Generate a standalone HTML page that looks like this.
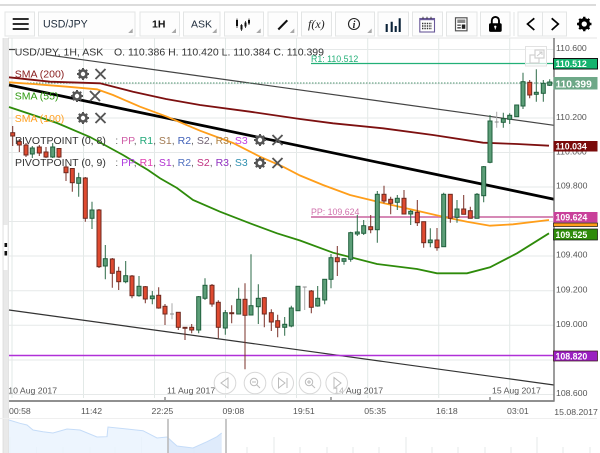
<!DOCTYPE html>
<html><head><meta charset="utf-8"><style>
html,body{margin:0;padding:0;background:#fff;width:600px;height:453px;overflow:hidden}
svg{display:block;filter:blur(.3px)}
text{font-family:"Liberation Sans",sans-serif}
.ax{font-size:8.7px;fill:#555}
.lg{font-size:10.5px}
.pl{font-size:8.8px;font-weight:bold;fill:#fff}
.btn{fill:#fdfdfd;stroke:#e3e5e5;stroke-width:1}
.tri{fill:#a8a8a8}
.x{stroke:#555;stroke-width:1.9;fill:none}
</style></head><body>
<svg width="600" height="453" viewBox="0 0 600 453" xmlns="http://www.w3.org/2000/svg">
<defs>
<g id="gear"><circle r="3.7" fill="none" stroke-width="2.3" stroke="currentColor"/><path d="M0-6V6M-6 0H6M-4.2-4.2L4.2 4.2M-4.2 4.2L4.2-4.2" stroke="currentColor" stroke-width="2" /><circle r="2.2" fill="#fff"/></g>
<g id="xx"><path class="x" d="M-5-5L5 5M-5 5L5-5"/></g>
</defs>

<!-- top bar -->
<rect x="0" y="4" width="596" height="2" fill="#dcdcdc"/>
<rect x="8" y="37.5" width="589" height="1" fill="#e4e4e4"/>
<!-- toolbar buttons -->
<rect class="btn" x="5" y="12" width="29.5" height="24"/>
<rect class="btn" x="38.5" y="12" width="96.5" height="24"/>
<rect class="btn" x="140" y="12" width="39.5" height="24"/>
<rect class="btn" x="183.5" y="12" width="36.5" height="24"/>
<rect class="btn" x="224.5" y="12" width="39" height="24"/>
<rect class="btn" x="268" y="12" width="29.5" height="24"/>
<rect class="btn" x="301.5" y="12" width="30" height="24"/>
<rect class="btn" x="335.5" y="12" width="39" height="24"/>
<rect class="btn" x="378" y="12" width="30.5" height="24"/>
<rect class="btn" x="412.5" y="12" width="30" height="24"/>
<rect class="btn" x="446.5" y="12" width="30.5" height="24"/>
<rect class="btn" x="480.5" y="12" width="29.5" height="24"/>
<path d="M514 12V36" stroke="#e3e5e5"/>
<rect class="btn" x="518" y="12" width="48.5" height="24"/>
<path d="M542.5 12V36" stroke="#e3e5e5"/>
<!-- triangles -->
<path class="tri" d="M128.2 33H132.7V28.5Z M171.5 33H176V28.5Z M212.2 33H216.7V28.5Z M256.2 33H260.7V28.5Z M289.8 33H294.3V28.5Z M367.2 33H371.7V28.5Z"/>
<!-- hamburger -->
<path d="M12.7 19H28.7M12.7 24H28.7M12.7 29H28.7" stroke="#111" stroke-width="1.7"/>
<text x="43" y="27.7" font-size="10.6" fill="#1c2a3a">USD/JPY</text>
<text x="152" y="27.7" font-size="10.5" font-weight="bold" fill="#111">1H</text>
<text x="191" y="27.7" font-size="10.5" fill="#1c2a3a">ASK</text>
<!-- candle icon -->
<path d="M237 18.5V28M241.5 24V31M245.5 21V28M249 18.5V25" stroke="#222" stroke-width=".8"/>
<path d="M237 20V26M241.5 25V29.5M245.5 22.5V26.5M249 20V23.5" stroke="#111" stroke-width="2"/>
<!-- pencil -->
<path d="M278.3 29.5L287.3 20.3" stroke="#111" stroke-width="2.1"/>
<!-- fx -->
<text x="308" y="28" font-size="12" font-style="italic" fill="#222" style="font-family:'Liberation Serif',serif">f(x)</text>
<!-- info -->
<circle cx="354" cy="24" r="5.5" fill="none" stroke="#222" stroke-width="1.1"/>
<text x="352.6" y="27.8" font-size="10" font-style="italic" font-weight="bold" fill="#222" style="font-family:'Liberation Serif',serif">i</text>
<!-- bars -->
<path d="M386.7 32V24M391.7 32V21.7M395.7 32V26M399.7 32V18.3" stroke="#0a2238" stroke-width="2.1"/>
<!-- calendar -->
<rect x="419.8" y="18.5" width="14.7" height="13.5" fill="#fff" stroke="#6a5a9a" stroke-width="1.1"/>
<path d="M420 19.5H434" stroke="#6a5a9a" stroke-width="1.4"/>
<path d="M423 16.7V19M427 16.7V19M431 16.7V19" stroke="#333" stroke-width=".9"/>
<path d="M422 23.5H432M422 26H432M422 28.5H432" stroke="#333" stroke-width="1.4" stroke-dasharray="1.4 1"/>
<!-- calc -->
<rect x="455.5" y="17.8" width="11.5" height="13" fill="#fff" stroke="#555" stroke-width="1.2"/>
<rect x="457.3" y="19.5" width="8" height="3.5" fill="#888"/>
<rect x="457.3" y="24.5" width="3.5" height="1.4" fill="#555"/>
<rect x="457.3" y="27" width="3.5" height="1.6" fill="#555"/>
<rect x="461.8" y="24.5" width="3.5" height="4.3" fill="#222"/>
<!-- lock -->
<path d="M491.8 24V20.5a3.6 3.6 0 0 1 7.2 0V24" fill="none" stroke="#000" stroke-width="1.9"/>
<rect x="489" y="23.3" width="12.7" height="8.6" rx="1.6" fill="#000"/>
<circle cx="495.3" cy="26.8" r="1.2" fill="#fff"/><rect x="494.8" y="27" width="1" height="2.4" fill="#fff"/>
<!-- chevrons -->
<path d="M534.3 18.3L527.5 24L534.3 30M551.7 18.3L558.3 24L551.7 30" fill="none" stroke="#000" stroke-width="1.7"/>
<use href="#gear" x="584.3" y="24" color="#000" transform="translate(-116.9 -4.8) scale(1.2)"/>

<!-- left strip -->
<rect x="3" y="38" width="5" height="415" fill="#e9e9e9"/>
<rect x="3.5" y="225" width="4" height="45" fill="#fff"/>
<path d="M3 38V453M8.5 38V453" stroke="#d8d8d8" stroke-width=".7"/>
<rect x="4.5" y="243" width="2.6" height="4" fill="#111"/>
<rect x="4.5" y="251" width="2.6" height="4.5" fill="#111"/>

<!-- grid -->
<path d="M12 38V398M83.5 38V398M154.5 38V398M225.5 38V398M296.5 38V398M367.7 38V398M438.7 38V398M509.7 38V398" stroke="#e2e9e7"/>
<path d="M9 49.5H554M9 83.7H554M9 118H554M9 152.5H554M9 187H554M9 221.5H554M9 256H554M9 290.7H554M9 325.3H554M9 360H554M9 394.5H554" stroke="#e6e9e9"/>

<!-- lines -->
<path d="M9 49.5H15M47 54.8L554 125.3" stroke="#444" stroke-width="1.2" fill="none"/>
<path d="M9 310L554 385" stroke="#333" stroke-width="1.2" fill="none"/>
<path d="M9 83H553" stroke="#4f9470" stroke-width="1.1" stroke-dasharray="1.5 1.5"/>
<path d="M311 63.5H553" stroke="#22b077" stroke-width="1.2"/>
<path d="M311 217H553" stroke="#d078ac" stroke-width="1.7"/>
<path d="M9 355.5H553" stroke="#b030d8" stroke-width="1.4"/>
<path d="M9 85L554 199.2" stroke="#000" stroke-width="2.8"/>
<path d="M9 77.3L50 81.7L100 83.3L133 91.7L166 99L200 105L250 111.7L300 119L333 123.3L383 128.3L433 135L483 142.7L517 144L549 145.7" fill="none" stroke="#7d1010" stroke-width="1.8"/>
<path d="M9 82.3L33 84L67 86.7L97 89.3L113 95L140 106.7L167 116.7L200 130.7L233 143L260 156.7L283 166.7L300 175.5L323 185L350 195L383 203L417 210.7L443 216.7L467 221.7L490 225.7L513 224.3L549 220" fill="none" stroke="#ff9e1a" stroke-width="1.8"/>
<path d="M9 107L33 115L57 123L90 137L123 155L148 170L160 178.3L177 188L193 200L220 211.7L250 223.3L277 233.3L300 240.5L333 252.7L377 264L417 269L437 273.3L467 273.3L490 267.3L517 253.3L549 233.3" fill="none" stroke="#2e8b0a" stroke-width="1.8"/>

<!-- wicks red -->
<path fill="none" stroke="#7a3028" stroke-width="1" d="M12.7 126V146M19.3 139V152M26 143V157M39.3 145V156M46 147V158M59 148V158M66 165V181M72.3 168V191.7M85.3 177V221.7M99 209V268M112.3 258V287.7M118.7 266.7V290M132 275V298.3M145.3 286V303.3M158.7 287.3V308.7M165 304V325M178.3 312V330M185 327V340M191.7 324V333.3M212 284V306.7M218.3 300.3V338.3M231.7 305.3V323.3M245 283.3V369.3M264.3 297V327.3M271.3 309.3V331M277.7 314.7V337.3M311.3 290V313.3M337.3 246V276M370.7 215V233.3M384 185.7V203.3M390.7 196.7V214.3M404 190V214M417.3 200V226M423.7 221.7V247.7M437 228V250.7M450.3 194.3V222.7M463.7 195V214.3M470.3 206.7V218.3M529.7 80V98.3"/>
<!-- wicks green -->
<path fill="none" stroke="#2d6b48" stroke-width="1" d="M32.3 146V158M52.7 143V158M78.7 172.7V196.7M92 201.7V229M105.3 245V279.3M125.7 261V283.3M139 276V296.7M152.3 291V304.3M198.7 296V333.3M205 278.3V300M225.3 310V334.7M238.7 287.7V314.3M251 254.3V315.3M258.3 284.3V324M284.7 317V335.7M291.3 305.7V327.3M298 286V311M317.7 286V306.7M324.7 279V304.3M331 254V288.3M344 258V264.7M350.7 231.7V261.7M357.3 215V236M363.7 220V235M377.3 191V242.7M397.3 195V210M410.7 210V225M430.3 228.3V247.3M443.7 192.7V247M457 200V222.7M477 193V218.3M483.7 166V202.3M490 115V163.3M503.3 112.7V127.7M509.7 113.3V124M516.7 105V117M523 72.7V109M536.3 69.3V101.7M543.3 80V101.7M549.7 79.3V86"/>
<path fill="none" stroke="#aaa" stroke-width="1" d="M172 303.3V319.3M304.7 287V310M496.7 111.7V127.7"/>
<path fill="none" stroke="#888" stroke-width="1" d="M170 314H174M302.7 287H306.7M494.7 122H498.7"/>
<!-- bodies red -->
<g fill="#df4a30" stroke="#6e2a20" stroke-width="1">
<rect x="10.7" y="132.7" width="4" height="3.3"/><rect x="17.3" y="141.5" width="4" height="3.5"/><rect x="24" y="145" width="4" height="10"/><rect x="37.3" y="147" width="4" height="6"/><rect x="44" y="152" width="4" height="5"/><rect x="57" y="148.5" width="4" height="8.5"/><rect x="64" y="167" width="4" height="5.7"/><rect x="70.3" y="168.5" width="4" height="14.2"/><rect x="83.3" y="178" width="4" height="40.3"/><rect x="97" y="210" width="4" height="56.7"/><rect x="110.3" y="259" width="4" height="14.3"/><rect x="116.7" y="271.3" width="4" height="10.4"/><rect x="130" y="276" width="4" height="19.7"/><rect x="143.3" y="286.7" width="4" height="12.3"/><rect x="156.7" y="295.3" width="4" height="12.7"/><rect x="163" y="306.3" width="4" height="7.7"/><rect x="176.3" y="312.3" width="4" height="15"/><rect x="183" y="327.3" width="4" height="1"/><rect x="189.7" y="327.3" width="4" height="2.7"/><rect x="210" y="285.3" width="4" height="18.7"/><rect x="216.3" y="302.3" width="4" height="25"/><rect x="229.7" y="312.7" width="4" height="1"/><rect x="243" y="299.3" width="4" height="16"/><rect x="262.3" y="297.7" width="4" height="16.3"/><rect x="269.3" y="312.7" width="4" height="9.3"/><rect x="275.7" y="320.7" width="4" height="6.6"/><rect x="309.3" y="291" width="4" height="16.3"/><rect x="335.3" y="257.7" width="4" height="4"/><rect x="368.7" y="226.7" width="4" height="3"/><rect x="382" y="194.3" width="4" height="6.7"/><rect x="388.7" y="199.3" width="4" height="4"/><rect x="402" y="198.3" width="4" height="15.7"/><rect x="415.3" y="212.3" width="4" height="10.4"/><rect x="421.7" y="221.7" width="4" height="21"/><rect x="435" y="240" width="4" height="7.7"/><rect x="448.3" y="194.3" width="4" height="24"/><rect x="461.7" y="209" width="4" height="5.3"/><rect x="468.3" y="210.7" width="4" height="7.6"/><rect x="527.7" y="82.3" width="4" height="12.7"/>
</g>
<!-- bodies green -->
<g fill="#5c9e78" stroke="#1f5f3c" stroke-width="1">
<rect x="30.3" y="148" width="4" height="6"/><rect x="50.7" y="147" width="4" height="10"/><rect x="76.7" y="177.7" width="4" height="5.6"/><rect x="90" y="210" width="4" height="8.3"/><rect x="103.3" y="258.7" width="4" height="7.3"/><rect x="123.7" y="275.7" width="4" height="6"/><rect x="137" y="286.3" width="4" height="9.4"/><rect x="150.3" y="296" width="4" height="2.7"/><rect x="196.7" y="296.7" width="4" height="33.3"/><rect x="203" y="285.3" width="4" height="13"/><rect x="223.3" y="312.7" width="4" height="15.3"/><rect x="236.7" y="299.3" width="4" height="14.7"/><rect x="249" y="305.7" width="4" height="9.3"/><rect x="256.3" y="298.3" width="4" height="8.4"/><rect x="282.7" y="324.3" width="4" height="3"/><rect x="289.3" y="308" width="4" height="18"/><rect x="296" y="286.3" width="4" height="24.4"/><rect x="315.7" y="298.3" width="4" height="7.7"/><rect x="322.7" y="279.3" width="4" height="20.7"/><rect x="329" y="257.7" width="4" height="21.6"/><rect x="342" y="258.7" width="4" height="2.6"/><rect x="348.7" y="232.7" width="4" height="26.6"/><rect x="355.3" y="232" width="4" height="2"/><rect x="361.7" y="225.7" width="4" height="7.6"/><rect x="375.3" y="194.3" width="4" height="35.4"/><rect x="395.3" y="198.3" width="4" height="4"/><rect x="408.7" y="211.3" width="4" height="2.7"/><rect x="428.3" y="240" width="4" height="2.7"/><rect x="441.7" y="194.3" width="4" height="52.4"/><rect x="455" y="209" width="4" height="8.3"/><rect x="475" y="194.3" width="4" height="24"/><rect x="481.7" y="166.7" width="4" height="29"/><rect x="488" y="121" width="4" height="41.3"/><rect x="501.3" y="118.7" width="4" height="3.6"/><rect x="507.7" y="115.3" width="4" height="4"/><rect x="514.7" y="105" width="4" height="11.7"/><rect x="521" y="81.7" width="4" height="24.3"/><rect x="534.3" y="92.3" width="4" height="2"/><rect x="541.3" y="83.3" width="4" height="10"/><rect x="547.7" y="82" width="4" height="3.3"/>
</g>

<!-- legend -->
<text class="lg" x="14.7" y="55.7" fill="#333">USD/JPY, 1H, ASK</text>
<text class="lg" x="114" y="55.7" fill="#333">O. 110.386 H. 110.420 L. 110.384 C. 110.399</text>
<text class="lg" x="14.7" y="77.3" fill="#8a2020">SMA (200)</text>
<text class="lg" x="14.7" y="99.3" fill="#2e9a10">SMA (55)</text>
<text class="lg" x="14.7" y="122" fill="#ffa020">SMA (100)</text>
<text class="lg" x="15" y="144" fill="#333">PIVOTPOINT (0, 8)</text>
<text class="lg" x="15" y="166" fill="#333">PIVOTPOINT (0, 9)</text>
<text class="lg" x="115.3" y="144"><tspan fill="#666">: </tspan><tspan fill="#d060a8">PP</tspan><tspan fill="#666">, </tspan><tspan fill="#20a878">R1</tspan><tspan fill="#666">, </tspan><tspan fill="#a07850">S1</tspan><tspan fill="#666">, </tspan><tspan fill="#4060b8">R2</tspan><tspan fill="#666">, </tspan><tspan fill="#706070">S2</tspan><tspan fill="#666">, </tspan><tspan fill="#b08040">R3</tspan><tspan fill="#666">, </tspan><tspan fill="#c040e0">S3</tspan></text>
<text class="lg" x="115.3" y="166"><tspan fill="#666">: </tspan><tspan fill="#b040e0">PP</tspan><tspan fill="#666">, </tspan><tspan fill="#e040b0">R1</tspan><tspan fill="#666">, </tspan><tspan fill="#b030d0">S1</tspan><tspan fill="#666">, </tspan><tspan fill="#5070c0">R2</tspan><tspan fill="#666">, </tspan><tspan fill="#c03080">S2</tspan><tspan fill="#666">, </tspan><tspan fill="#9030c0">R3</tspan><tspan fill="#666">, </tspan><tspan fill="#3090b0">S3</tspan></text>
<g color="#555">
<use href="#gear" x="83" y="74"/><use href="#xx" x="100.5" y="74"/>
<use href="#gear" x="77" y="96"/><use href="#xx" x="95" y="96"/>
<use href="#gear" x="83" y="118"/><use href="#xx" x="100.5" y="118"/>
<use href="#gear" x="260" y="140"/><use href="#xx" x="277.5" y="140"/>
<use href="#gear" x="260" y="163"/><use href="#xx" x="277.5" y="163"/>
</g>
<text x="311" y="62" font-size="8.8" fill="#22b077">R1: 110.512</text>
<text x="311" y="215" font-size="8.8" fill="#d070ac">PP: 109.624</text>

<!-- expand button -->
<rect x="525.5" y="46.5" width="21" height="19.5" fill="#fff" fill-opacity=".7" stroke="#e2e2e2"/>
<rect x="530" y="55" width="9" height="8" fill="none" stroke="#d0d0d0" stroke-width="1.2"/>
<rect x="535" y="50" width="9" height="8" fill="#fff" stroke="#d0d0d0" stroke-width="1.2"/>
<path d="M537 56L542 52M539 52H542V55" fill="none" stroke="#ccc"/>

<!-- axes -->
<path d="M554 38V401" stroke="#666" stroke-width="1.3"/>
<path d="M9 401H554.6" stroke="#808080" stroke-width="1.7"/>
<path d="M165 397V400M331 397V400M490 397V400" stroke="#555"/>
<g class="ax">
<text class="ax" x="556" y="51">110.600</text>
<text class="ax" x="556" y="120">110.200</text>
<text class="ax" x="556" y="154.5">110.000</text>
<text class="ax" x="556" y="188.3">109.800</text>
<text class="ax" x="556" y="257.7">109.400</text>
<text class="ax" x="556" y="292.3">109.200</text>
<text class="ax" x="556" y="327">109.000</text>
<text class="ax" x="556" y="396">108.600</text>
<text class="ax" x="8.3" y="393.3">10 Aug 2017</text>
<text class="ax" x="167" y="393.3">11 Aug 2017</text>
<text class="ax" x="334.3" y="393.3">14 Aug 2017</text>
<text class="ax" x="492" y="393.3">15 Aug 2017</text>
<text class="ax" x="9" y="414">00:58</text>
<text class="ax" x="81" y="414">11:42</text>
<text class="ax" x="151.5" y="414">22:25</text>
<text class="ax" x="222.5" y="414">09:08</text>
<text class="ax" x="293" y="414">19:51</text>
<text class="ax" x="364.3" y="414">05:35</text>
<text class="ax" x="436" y="414">16:18</text>
<text class="ax" x="507" y="414">03:01</text>
<text class="ax" x="554.3" y="415">15.08.2017</text>
</g>

<!-- price labels -->
<rect x="553.5" y="58.5" width="44" height="10.5" fill="#14b36e" stroke="#111"/>
<text class="pl" x="555.5" y="67">110.512</text>
<rect x="553.5" y="77" width="44" height="12.5" fill="#6ea888"/>
<text class="pl" x="555.5" y="87.3" style="font-size:10.2px">110.399</text>
<rect x="553.5" y="141" width="44" height="10.5" fill="#7a0a0a"/>
<text class="pl" x="555.5" y="149.5">110.034</text>
<rect x="553.5" y="223" width="44" height="3.5" fill="#ff9e1a" stroke="#111" stroke-width=".7"/>
<rect x="553.5" y="212" width="44" height="10.5" fill="#c9409a"/>
<text class="pl" x="555.5" y="220.5">109.624</text>
<rect x="553.5" y="229" width="44" height="11" fill="#2e8b0a" stroke="#111" stroke-width=".7"/>
<text class="pl" x="555.5" y="237.8">109.525</text>
<rect x="553.5" y="351" width="44" height="10" fill="#9a20c0" stroke="#311" stroke-width=".7"/>
<text class="pl" x="555.5" y="359.3">108.820</text>

<!-- nav buttons -->
<g fill="#fff" fill-opacity=".55" stroke="#d8d8d8" stroke-width="1">
<circle cx="225" cy="383" r="10.8"/><circle cx="255" cy="383" r="10.8"/><circle cx="282.7" cy="383" r="10.8"/><circle cx="310" cy="383" r="10.8"/><circle cx="336.7" cy="383" r="10.8"/>
</g>
<g fill="none" stroke="#bbb" stroke-width="1">
<path d="M228 378V388L221 383Z"/>
<circle cx="254" cy="382" r="3.7"/><path d="M256.6 384.6L260 388M252 382H256"/>
<path d="M278.5 378V388L285 383ZM287 378V388"/>
<circle cx="309" cy="382" r="3.7"/><path d="M311.6 384.6L315 388M307 382H311M309 380V384"/>
<path d="M334 377.5V388.5L341 383Z"/>
</g>

<!-- navigator -->
<path d="M0 418.5H597" stroke="#efefef"/>
<path d="M10 437V453M141.5 437V453M274 437V453M406 437V453M537 437V453M36.5 447V453M63 447V453M90 447V453M115 447V453M194 447V453M221 447V453M247 447V453M300 447V453M327 447V453M353 447V453M379 447V453M432 447V453M458 447V453M485 447V453M511 447V453M563 447V453M590 447V453" stroke="#e4e9e8"/>
<path d="M9 420L20 423.3L27 425L33 430L43 431.7L53 433L67 429L80 430L97 437L107 436.7L108 427L127 429L143 430.7L157 438L168 437V453H9Z" fill="#eaf3fe" fill-opacity=".85"/>
<path d="M168 437L177 446L193 448L207 441.7L217 436.7L221.7 433V453H168Z" fill="#dce9fb" fill-opacity=".9"/>
<path d="M9 420L20 423.3L27 425L33 430L43 431.7L53 433L67 429L80 430L97 437L107 436.7L108 427L127 429L143 430.7L157 438L167 437L177 446L193 448L207 441.7L217 436.7L221.7 433" fill="none" stroke="#c5dcf8"/>
<path d="M168 419V453M226 419V453" stroke="#bbb" stroke-width="1.6"/>
</svg>
</body></html>
